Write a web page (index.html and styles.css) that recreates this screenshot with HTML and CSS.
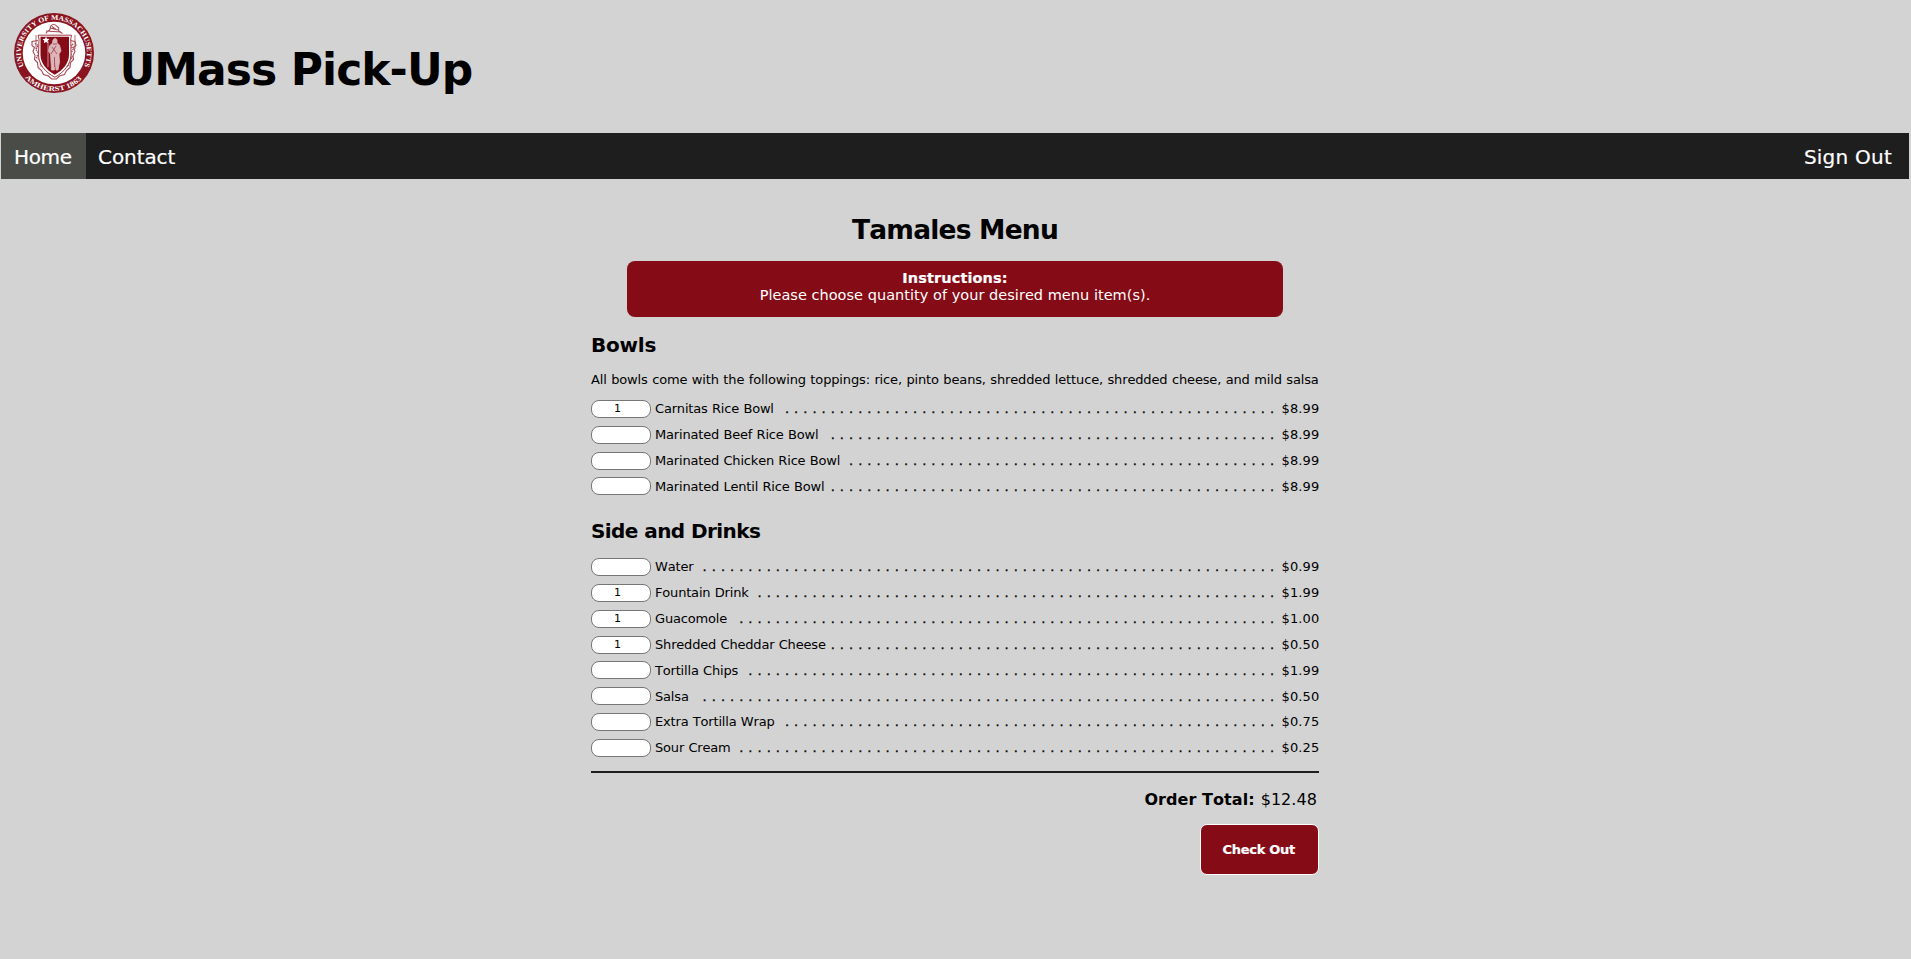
FILE: index.html
```html
<!DOCTYPE html>
<html lang="en">
<head>
<meta charset="utf-8">
<title>UMass Pick-Up</title>
<link rel="stylesheet" href="styles.css">
</head>
<body>
<header class="header">
  <svg class="seal" viewBox="0 0 80 80" role="img" aria-label="University seal">
    <defs>
      <path id="arc-top" d="M9.9 53.4A33 33 0 1 1 70.1 53.4"/>
      <path id="arc-bottom" d="M11 64.6A38 38 0 0 0 69 64.6"/>
    </defs>
    <circle cx="40" cy="40" r="40" fill="#8a1420"/>
    <circle cx="40" cy="40" r="31.3" fill="#fff"/>
    <text class="seal-text"><textPath href="#arc-top" textLength="131" lengthAdjust="spacingAndGlyphs">UNIVERSITY OF MASSACHUSETTS</textPath></text>
    <text class="seal-text"><textPath href="#arc-bottom" textLength="64" lengthAdjust="spacingAndGlyphs">AMHERST 1863</textPath></text>
    <!-- crest -->
    <g fill="none" stroke="#a94a53" stroke-width="1.1">
      <path d="M32 20.5c1-3 3-2 4-4 0-3 1.500-5 3.500-5 3 0 3 2 5 3 1 2-1 3 1 4l3 2M32 18l15 1M36 15l8 2M38 13.500l4 3"/>
      <path d="M22 22v14M61 22v14" stroke-width=".8"/>
      <path d="M24 27.500l-6 1v4l2.500 2-1.500 4 2 4-.5 4 3 3 .5 5 3.500 3 2 4 5 1.500 3 3h5l3-3 5-1.500 2-4 3.500-3 .5-5 3-3-.5-4 2-4-1.500-4 2.500-2-1-4-5-1"/>
      <path d="M21 30.500l3 2-2 4 2.500 4-2 4 4 3 0 5 4 2 3 4 4 1.500 3 3 3-3 4-1.500 3-4 4-2 0-5 4-3-2-4 2.500-4-2-4 3-2" stroke-width="1.500" stroke-dasharray="1.300 .8"/>
    </g>
    <path d="M24 22.200h33.500l-.7 3.600.2 16c0 9-7 17.500-16.200 22.500C31 59 24.500 51 24.500 41.800L25 26z" fill="#fff" stroke="#a13b46" stroke-width="1"/>
    <path d="M26.500 23.800h28.500v18c0 8-5.500 15-14.300 20-8.700-5-14.200-12-14.200-20z" fill="#850b16"/>
    <path d="M32 23.500l1 2.200 2.500.3-1.800 1.800.5 2.500-2.200-1.200-2.200 1.200.5-2.500-1.800-1.800 2.500-.3z" fill="#fff"/>
    <path d="M34 28v26M39 27c1-2 3.500-2 4 0v3l2.500 2 1.500 6-2 3 .5 8-1.500 8h-2l-.5-8-1 8h-3l-.5-8-.5-8-2-3 1-5 3-3z" fill="#dcb5b8" stroke="#dcb5b8" stroke-width=".8"/>
    <path d="M38 34l5 7M42 33l-5 8M40.500 44v10M39 31h4" fill="none" stroke="#a13b46" stroke-width=".8"/>
  </svg>
  <h1 class="brand">UMass Pick-Up</h1>
</header>
<nav class="nav">
  <a class="nav-link active">Home</a>
  <a class="nav-link contact">Contact</a>
  <a class="nav-link signout">Sign Out</a>
</nav>
<main class="menu">
  <h2 class="title">Tamales Menu</h2>
  <section class="instructions"><b>Instructions:</b><p>Please choose quantity of your desired menu item(s).</p></section>
  <h3 class="section-title bowls">Bowls</h3>
  <p class="description">All bowls come with the following toppings: rice, pinto beans, shredded lettuce, shredded cheese, and mild salsa</p>
  <div class="items" id="bowls"></div>
  <h3 class="section-title sides">Side and Drinks</h3>
  <div class="items side-items" id="sides"></div>
  <div class="summary">
    <div class="total"><b>Order Total:</b><span>$12.48</span></div>
    <button class="checkout">Check Out</button>
  </div>
</main>
<script src="menu.js"></script>
</body>
</html>
```
FILE: styles.css
```css
* { box-sizing: border-box; margin: 0; padding: 0; }

body {
  background: #d3d3d3;
  color: #000;
  font-family: Verdana, "DejaVu Sans", sans-serif;
  font-kerning: none;
  min-height: 959px;
}

.header { display: flex; height: 133px; padding: 13px 0 0 14px; }
.seal { width: 80px; height: 80px; flex: none; }
.seal-text { font: bold 7px "Liberation Serif", serif; fill: #fff; }
.brand {
  margin: 31px 0 0 25.5px;
  font-size: 44px;
  line-height: 51px;
  letter-spacing: -0.95px;
  white-space: nowrap;
}

.nav {
  display: flex;
  height: 46px;
  margin: 0 2px 0 1px;
  background: #1e1e1e;
  color: #fff;
  font-size: 20px;
  line-height: 48px;
}
.nav-link { padding-left: 12px; letter-spacing: -0.08px; -webkit-text-stroke: 0.2px; }
.active { width: 85px; height: 46px; background: #4a4c48; padding-left: 13px; letter-spacing: -0.35px; }
.signout { margin-left: auto; padding-right: 17px; letter-spacing: 0.23px; }

.menu { width: 728px; margin: 0 0 0 591px; padding-top: 34px; }
.title { font-size: 26.5px; line-height: 33px; height: 32px; letter-spacing: -0.8px; text-align: center; }
.instructions {
  width: 656px;
  height: 56px;
  margin: 16px auto 0;
  padding-top: 9px;
  border-radius: 8px;
  background: #850b16;
  color: #fff;
  font-size: 14.5px;
  line-height: 17px;
  text-align: center;
}
.instructions b { display: block; letter-spacing: 0.1px; -webkit-text-stroke: 0.2px; }
.instructions p { letter-spacing: 0.03px; }
.section-title { font-size: 20px; line-height: 24px; }
.bowls { margin-top: 16.4px; letter-spacing: -0.2px; }
.sides { margin-top: 20px; letter-spacing: -0.57px; }
.description { margin-top: 14px; font-size: 13px; line-height: 18px; letter-spacing: -0.14px; word-spacing: 0.48px; white-space: nowrap; }

.items { margin-top: 6.600px; font-size: 13px; letter-spacing: -0.18px; word-spacing: 0.4px; }
.side-items { margin-top: 10.7px; }
.item { display: flex; align-items: center; height: 25.86px; line-height: 18px; white-space: nowrap; }
.quantity {
  width: 60px;
  height: 18px;
  flex: none;
  margin-right: 4px;
  padding-right: 7px;
  border: 1px solid #767676;
  border-radius: 8px;
  background: #fff;
  font: 11px Verdana, "DejaVu Sans", sans-serif;
  text-align: center;
}
.name, .dots, .price { padding-top: 0.5px; }
.dots { flex: 1; margin-left: 3px; text-align: right; letter-spacing: 0.443px; word-spacing: 0; -webkit-text-stroke: 0.3px; }
.price { flex: none; width: 37.5px; margin-left: 7px; letter-spacing: 0.13px; }

.summary {
  display: flex;
  flex-direction: column;
  align-items: flex-end;
  margin-top: 10px;
  border-top: 2px solid #1e1e1e;
}
.total { display: flex; gap: 6px; margin: 15px 2px 0 0; font-size: 16px; line-height: 24px; letter-spacing: 0.06px; }
.checkout {
  width: 119.5px;
  height: 51px;
  margin-top: 12px;
  padding: 1px 1px 0 0;
  border: 1px solid #fff;
  border-radius: 7px;
  background: #850b16;
  color: #fff;
  font: bold 13px Verdana, "DejaVu Sans", sans-serif;
  letter-spacing: -0.29px;
  -webkit-text-stroke: 0.2px;
}
```
FILE: menu.js
```js
// name, price, leader dot count, quantity
const menu = {
  bowls: [
    ['Carnitas Rice Bowl', '8.99', 54, 1],
    ['Marinated Beef Rice Bowl', '8.99', 49],
    ['Marinated Chicken Rice Bowl', '8.99', 47],
    ['Marinated Lentil Rice Bowl', '8.99', 49]
  ],
  sides: [
    ['Water', '0.99', 63],
    ['Fountain Drink', '1.99', 57, 1],
    ['Guacomole', '1.00', 59, 1],
    ['Shredded Cheddar Cheese', '0.50', 49, 1],
    ['Tortilla Chips', '1.99', 58],
    ['Salsa', '0.50', 63],
    ['Extra Tortilla Wrap', '0.75', 54],
    ['Sour Cream', '0.25', 59]
  ]
};

for (const [section, items] of Object.entries(menu)) {
  document.getElementById(section).innerHTML = items.map(([name, price, dots, quantity]) => `
    <div class="item">
      <input class="quantity" aria-label="${name}" value="${quantity || ''}">
      <span class="name">${name}</span>
      <span class="dots">${Array(dots).fill('.').join(' ')}</span>
      <span class="price">$${price}</span>
    </div>`).join('');
}
```
